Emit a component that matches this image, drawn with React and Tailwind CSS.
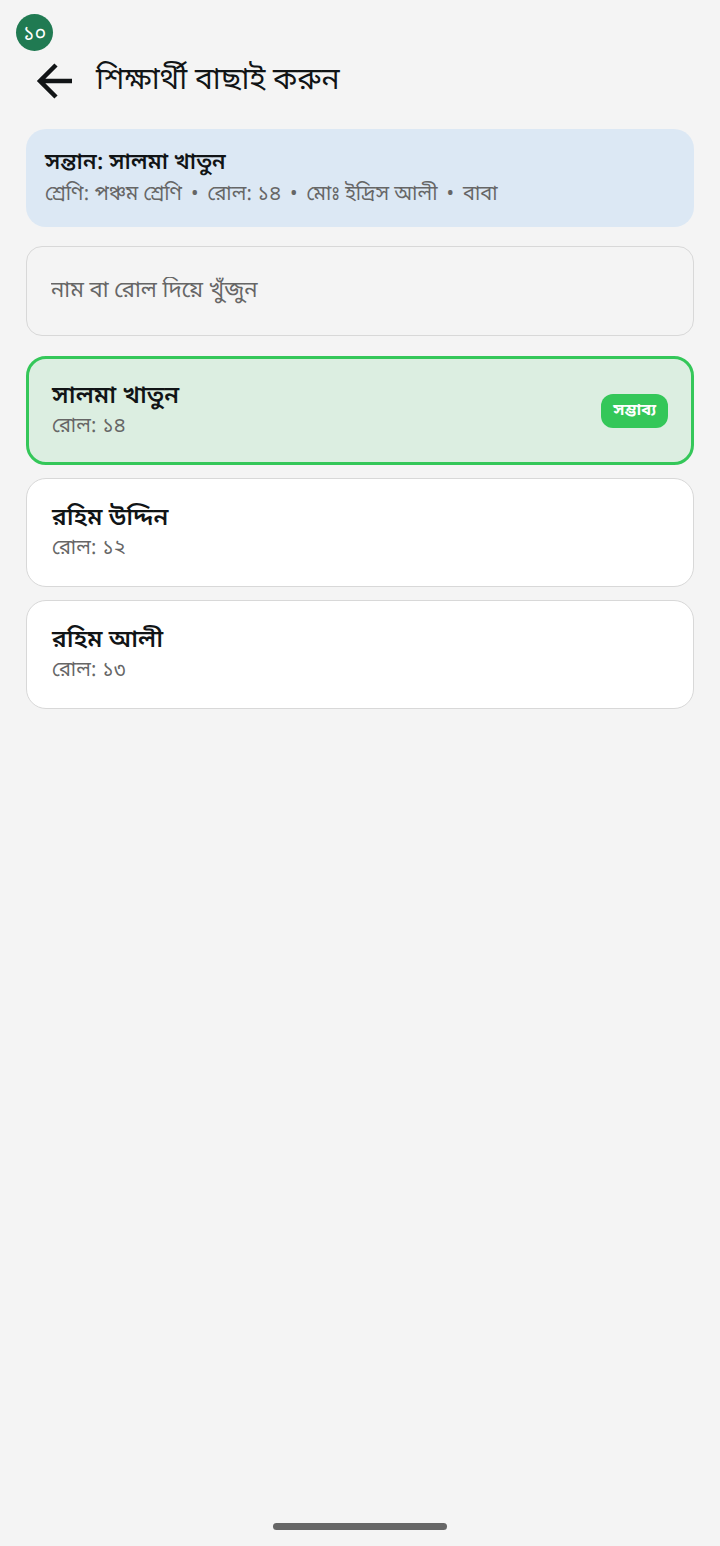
import { Fragment } from 'react';

const child = {
  name: 'সালমা খাতুন',
  details: ['শ্রেণি: পঞ্চম শ্রেণি', 'রোল: ১৪', 'মোঃ ইদ্রিস আলী', 'বাবা'],
};

const students = [
  { id: 1, name: 'সালমা খাতুন', roll: '১৪', likely: true },
  { id: 2, name: 'রহিম উদ্দিন', roll: '১২', likely: false },
  { id: 3, name: 'রহিম আলী', roll: '১৩', likely: false },
];

function StudentCard({ student }) {
  return (
    <button
      type="button"
      className={`flex h-[109px] w-full items-center justify-between rounded-[20px] text-left ${
        student.likely
          ? 'border-3 border-[#34c759] bg-[#dceee1] px-[23px]'
          : 'border border-[#d8d8d8] bg-white px-[25px]'
      }`}
    >
      <span className="flex flex-col">
        <span className="text-2xl leading-8 font-semibold text-[#111416]">{student.name}</span>
        <span className="text-xl leading-7 text-[#666]">রোল: {student.roll}</span>
      </span>
      {student.likely && (
        <span className="rounded-xl bg-[#34c759] px-3 py-2 text-base leading-[18px] font-bold text-white">সম্ভাব্য</span>
      )}
    </button>
  );
}

export default function App() {
  return (
    <div className="flex min-h-screen flex-col bg-[#f4f4f4] font-['Noto_Sans_Bengali_UI','Noto_Sans_Bengali','Noto_Sans',sans-serif]">
      <div className="px-4 pt-[14px]">
        <span className="flex size-[37px] items-center justify-center rounded-full bg-[#207a52] pt-1 text-xl text-white">১০</span>
      </div>

      <header className="flex h-[60px] items-center gap-6 px-9">
        <button type="button" aria-label="ফিরে যান">
          <svg className="size-9" viewBox="0 0 36 36" fill="none" stroke="#111416" strokeWidth="4.5">
            <path d="M36 18H4M20 2L4 18L20 34" />
          </svg>
        </button>
        <h1 className="text-3xl text-[#111416]">শিক্ষার্থী বাছাই করুন</h1>
      </header>

      <main className="flex flex-1 flex-col px-[26px] pt-[18px]">
        <section className="min-h-[98px] rounded-[20px] bg-[#dce8f4] px-[19px] pt-[19px]">
          <h2 className="text-[22px] leading-8 font-semibold text-[#111416]">সন্তান: {child.name}</h2>
          <p className="text-xl leading-[30px] text-[#666]">
            {child.details.map((detail, i) => (
              <Fragment key={detail}>
                {i > 0 && <span className="mx-[9px]">•</span>}
                {detail}
              </Fragment>
            ))}
          </p>
        </section>

        <input
          type="text"
          aria-label="নাম বা রোল দিয়ে খুঁজুন"
          placeholder="নাম বা রোল দিয়ে খুঁজুন"
          className="mt-[19px] h-[90px] w-full rounded-2xl border border-[#d8d8d8] px-6 text-[22px] leading-10 placeholder:text-[#666]"
        />

        <ul className="mt-5 flex flex-col gap-[13px]">
          {students.map((student) => (
            <li key={student.id}>
              <StudentCard student={student} />
            </li>
          ))}
        </ul>
      </main>

      <div className="mx-auto mb-4 h-[7px] w-[174px] rounded-full bg-[#666]" />
    </div>
  );
}
